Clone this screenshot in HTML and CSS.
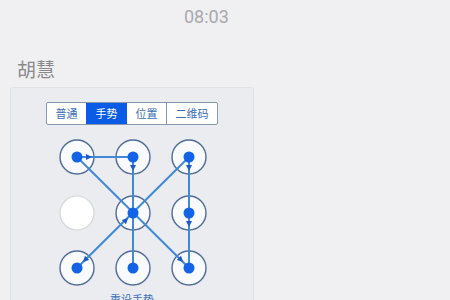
FILE: index.html
```html
<!DOCTYPE html>
<html lang="zh">
<head>
<meta charset="utf-8">
<link rel="stylesheet" href="styles.css">
</head>
<body>
<div class="time">08:03</div>
<div class="name">胡慧</div>
<div class="card">
  <div class="tabs">
    <div class="tab">普通</div>
    <div class="tab active">手势</div>
    <div class="tab">位置</div>
    <div class="tab">二维码</div>
  </div>
  <svg class="pattern" width="150" height="150" viewBox="0 0 150 150">
    <g class="ring">
      <circle cx="19" cy="19" r="17"/>
      <circle cx="75" cy="19" r="17"/>
      <circle cx="131" cy="19" r="17"/>
      <circle cx="75" cy="75" r="17"/>
      <circle cx="131" cy="75" r="17"/>
      <circle cx="19" cy="130" r="17"/>
      <circle cx="75" cy="130" r="17"/>
      <circle cx="131" cy="130" r="17"/>
    </g>
    <circle class="blank" cx="19" cy="75" r="17"/>
    <g class="line">
      <line x1="19" y1="19" x2="75" y2="19"/>
      <line x1="75" y1="19" x2="75" y2="130"/>
      <line x1="19" y1="19" x2="131" y2="130"/>
      <line x1="131" y1="19" x2="19" y2="130"/>
      <line x1="131" y1="19" x2="131" y2="130"/>
    </g>
    <g class="dot">
      <circle cx="19" cy="19" r="5.5"/>
      <circle cx="75" cy="19" r="5.5"/>
      <circle cx="131" cy="19" r="5.5"/>
      <circle cx="75" cy="75" r="5.5"/>
      <circle cx="131" cy="75" r="5.5"/>
      <circle cx="19" cy="130" r="5.5"/>
      <circle cx="75" cy="130" r="5.5"/>
      <circle cx="131" cy="130" r="5.5"/>
    </g>
    <g class="arrow">
      <polygon points="-3,-3 3,0 -3,3" transform="translate(31 19)"/>
      <polygon points="-3,-3 3,0 -3,3" transform="translate(75 30) rotate(90)"/>
      <polygon points="-3,-3 3,0 -3,3" transform="translate(131 30) rotate(90)"/>
      <polygon points="-3,-3 3,0 -3,3" transform="translate(131 86) rotate(90)"/>
      <polygon points="-3,-3 3,0 -3,3" transform="translate(123 122) rotate(45)"/>
      <polygon points="-3,-3 3,0 -3,3" transform="translate(68 82) rotate(-45)"/>
      <polygon points="-3,-3 3,0 -3,3" transform="translate(27 122) rotate(135)"/>
    </g>
  </svg>
  <div class="reset">重设手势</div>
</div>
</body>
</html>
```
FILE: styles.css
```css
html, body {
  margin: 0;
  padding: 0;
}
body {
  background: #f0f0f3;
  font-family: "Noto Sans CJK SC", Roboto, sans-serif;
  width: 450px;
  height: 300px;
  overflow: hidden;
}
.time {
  font-family: Roboto, "Noto Sans CJK SC", sans-serif;
  font-size: 18px;
  color: #a9a9ad;
  padding-left: 184px;
  padding-top: 5px;
  line-height: 24px;
  height: 24px;
}
.name {
  margin-top: 26px;
  margin-left: 17px;
  font-size: 19px;
  line-height: 28px;
  color: #8a8a8c;
}
.card {
  margin-top: 4px;
  margin-left: 10px;
  width: 244px;
  height: 240px;
  background: #ebecef;
  border: 1px solid #e0e1e5;
  border-radius: 3px;
  display: flex;
  flex-direction: column;
  align-items: center;
  padding-top: 14px;
  box-sizing: border-box;
}
.tabs {
  display: flex;
  border: 1px solid #8797ae;
  border-radius: 2px;
  background: #ffffff;
  height: 23px;
  box-sizing: border-box;
}
.tab {
  padding: 0 8.5px;
  font-size: 11px;
  line-height: 21px;
  color: #3c6fba;
  border-left: 1px solid #8797ae;
}
.tab:first-child {
  border-left: none;
}
.tab.active {
  background: #0a5ce6;
  color: #ffffff;
  border-left-color: #0a5ce6;
}
.tab.active + .tab {
  border-left-color: #0a5ce6;
}
.pattern {
  display: block;
  margin-top: 13px;
  margin-left: 2px;
}
.ring circle {
  fill: #f8fafd;
  stroke: #4f6c96;
  stroke-width: 1.4;
}
.blank {
  fill: #ffffff;
  stroke: #d6d7da;
  stroke-width: 1.2;
}
.line line {
  stroke: #4089d6;
  stroke-width: 2;
}
.dot circle {
  fill: #1463e4;
}
.arrow polygon {
  fill: #1c5cc4;
}
.reset {
  margin-top: 3px;
  font-size: 11px;
  line-height: 16px;
  color: #3c6fba;
}
```
